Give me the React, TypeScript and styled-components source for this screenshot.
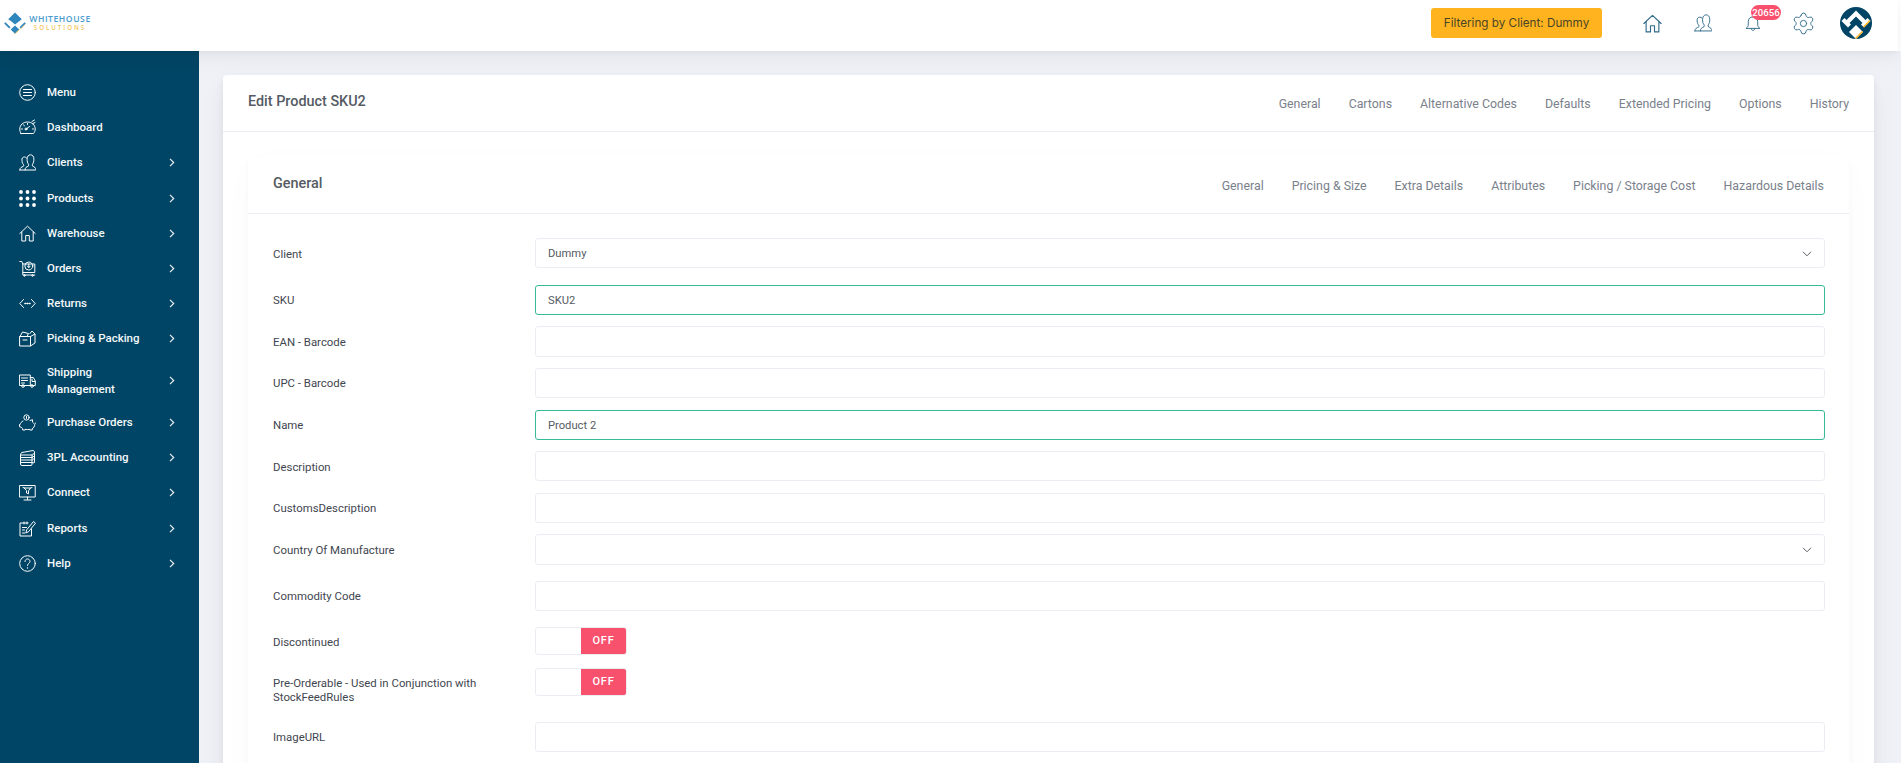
import React from 'react';
import styled, { createGlobalStyle } from 'styled-components';
import { Settings } from 'lucide-react';

const Global = createGlobalStyle`
  html, body { margin: 0; padding: 0; height: 100%; overflow: hidden; background: #f0f1f7; }
  #root { height: 100%; }
  * { box-sizing: border-box; }
`;

const Shell = styled.div`
  display: flex;
  width: 100%;
  height: 763px;
  overflow: hidden;
  font-family: Roboto, 'Liberation Sans', sans-serif;
`;
const Viewport = styled.div`
  flex: 1;
  min-width: 0;
  display: flex;
  flex-direction: column;
`;
const Rail = styled.div`
  width: 3px;
  background: #f0f1f7;
`;
const RailCap = styled.div`
  height: 51px;
  background: #fff;
`;
const TopBar = styled.header`
  height: 51px;
  flex: none;
  background: #fff;
  display: flex;
  align-items: center;
  position: relative;
  z-index: 2;
  box-shadow: 0 7px 16px rgba(4, 9, 20, 0.05), 0 2px 4px rgba(4, 9, 20, 0.03);
`;
const Logo = styled.div`
  display: flex;
  align-items: center;
  margin-left: 4px;
  margin-top: -5px;
  gap: 2px;
`;
const LogoWords = styled.div`
  display: flex;
  flex-direction: column;
  align-items: center;
  width: 64px;
`;
const LogoMain = styled.span`
  font: 600 8.6px/9px 'Open Sans', sans-serif;
  letter-spacing: 0.55px;
  color: #4a9bce;
  white-space: nowrap;
`;
const LogoSub = styled.span`
  font: 600 6.2px/8px 'Open Sans', sans-serif;
  letter-spacing: 1.95px;
  color: #f3c55e;
  white-space: nowrap;
`;
const TopRight = styled.div`
  margin-left: auto;
  padding-bottom: 5px;
  display: flex;
  align-items: center;
`;
const FilterBadge = styled.div`
  width: 171px;
  height: 30px;
  margin-right: 41px;
  background: #ffb41f;
  border-radius: 3px;
  display: flex;
  align-items: center;
  justify-content: center;
  font: 400 11.7px Inter, sans-serif;
  color: #4b4527;
  white-space: nowrap;
`;
const TopIcon = styled.div<{ $w: number; $mr: number }>`
  width: ${(p) => p.$w}px;
  margin-right: ${(p) => p.$mr}px;
  display: flex;
  position: relative;
  color: #2f6a8a;
`;
const GearIcon = styled(Settings)`
  flex: none;
  margin: -3px;
`;
const CountBadge = styled.span`
  position: absolute;
  top: -10px;
  left: 6px;
  width: 30px;
  height: 15px;
  border-radius: 8px;
  background: #f7516e;
  color: #fff;
  font: 500 9.6px/15px Roboto, sans-serif;
  text-align: center;
`;
const Avatar = styled.div`
  width: 32px;
  height: 32px;
  margin-right: 26px;
  display: flex;
`;
const Body = styled.div`
  flex: 1;
  min-height: 0;
  display: flex;
`;
const Sidebar = styled.nav`
  width: 199px;
  flex: none;
  background: #004565;
  padding: 24px 0 0 19px;
  color: #fff;
`;
const NavItem = styled.div<{ $tall?: boolean }>`
  display: flex;
  align-items: center;
  height: ${(p) => (p.$tall ? 48.5 : 35.2)}px;
  padding-right: 23px;
`;
const NavIcon = styled.div`
  width: 17px;
  height: 17px;
  flex: none;
  margin-right: 11px;
  display: flex;
`;
const NavText = styled.span`
  flex: 1;
  font: 500 11.5px/17px Roboto, sans-serif;
  color: #f4f8fa;
`;
const NavChevron = styled.div`
  width: 8px;
  display: flex;
  justify-content: center;
`;
const Main = styled.main`
  flex: 1;
  min-width: 0;
  padding: 24px 24px 0;
  overflow: hidden;
`;
const shadow = `0 7.5px 35px rgba(4,9,20,.03), 0 15px 22px rgba(4,9,20,.03), 0 4px 8.5px rgba(4,9,20,.05), 0 2px 3px rgba(4,9,20,.03)`;
const OuterCard = styled.section`
  background: #fff;
  border-radius: 4px;
  box-shadow: ${shadow};
  min-height: 900px;
`;
const CardHead = styled.div`
  height: 57px;
  border-bottom: 1px solid #ebecf1;
  display: flex;
  align-items: center;
  justify-content: space-between;
  padding: 0 25px;
`;
const Title = styled.h2`
  margin: -3px 0 0;
  font: 500 14.4px/20px Roboto, sans-serif;
  color: #555b63;
`;
const Tabs = styled.div`
  display: flex;
  gap: 28px;
  margin-top: 1px;
`;
const Tab = styled.span`
  font: 400 12.35px/16px Roboto, sans-serif;
  color: #7a818b;
  white-space: nowrap;
`;
const InnerWrap = styled.div`
  padding: 25px 25px 0;
`;
const InnerCard = styled.section`
  background: #fff;
  border-radius: 4px;
  box-shadow: 0 7.5px 35px rgba(4,9,20,.02), 0 4px 8.5px rgba(4,9,20,.02), 0 2px 3px rgba(4,9,20,.015);
  min-height: 800px;
`;
const Form = styled.div`
  padding: 24px 24px 0 25px;
`;
const Row = styled.div<{ $after: number }>`
  display: grid;
  grid-template-columns: 262px 1fr;
  margin-bottom: ${(p) => p.$after}px;
`;
const Label = styled.label`
  font: 400 11.4px/14px Roboto, sans-serif;
  color: #3f4650;
  padding-top: 8.5px;
  width: 212px;
`;
const Field = styled.div<{ $valid?: boolean }>`
  height: 30.4px;
  border: 1px solid ${(p) => (p.$valid ? '#35bb95' : '#ecedf3')};
  border-radius: 3px;
  background: #fff;
  display: flex;
  align-items: center;
  justify-content: space-between;
  padding: 1px 12px 0;
  font: 400 11.2px Roboto, sans-serif;
  color: #555b63;
`;
const Toggle = styled.div`
  width: 92px;
  height: 28px;
  border: 1px solid #ecedf3;
  border-radius: 3px;
  display: flex;
  justify-content: flex-end;
  overflow: hidden;
`;
const ToggleOff = styled.span`
  width: 45px;
  background: #f7516e;
  color: #fff;
  font: 500 11px/25px Roboto, sans-serif;
  letter-spacing: 0.8px;
  text-align: center;
`;

const S = (p: { children: React.ReactNode; size?: number; w?: number }) => (
  <svg width={p.size ?? 17} height={p.size ?? 17} viewBox="0 0 17 17" fill="none" stroke="currentColor" strokeWidth={p.w ?? 1} strokeLinecap="round" strokeLinejoin="round">
    {p.children}
  </svg>
);

const homePath = 'M.8 8.500L8.500 1.200l7.700 7.300M2.800 7v9h3.900v-5.500h3.600V16h3.900V7';
const usersA = 'M.8 16h15.400M.8 16c0-2.500 2-3 3.500-3.600.5-.5.5-1.200.2-1.800-1-1-1.500-2.500-1.500-4C2.500 4.200 3.800 3 5.500 3c.8 0 1.500.3 2 .8';
const usersB = 'M6 16c0-2.500 1.500-3 3.300-3.800.5-.6.5-1.400.2-2-1-1-1.400-3-1.400-5C8.100 2.500 9.500.8 11.500.8s3.400 1.700 3.400 4.400c0 2-.5 4-1.400 5-.3.6-.3 1.400.2 2 1.500.7 3.300 1.300 3.300 3.800';

const icons: Record<string, React.ReactNode> = {
  menu: <S><circle cx="8.500" cy="8.500" r="7.800" /><path d="M4.500 5.500h8M4.500 8.500h8M4.500 11.500h8" /></S>,
  dash: <S><path d="M2 14.500h12.500c1-1.200 1.700-2.800 1.700-4.500 0-4-3.400-7-7.700-7S.8 6 .8 10c0 1.700.4 3.300 1.200 4.500z" /><path d="M6.500 10.500l4-3M2.500 10h1M13.500 10h1M4.500 6l1 .8M8.500 4.500v1" /><circle cx="7" cy="10" r="1" /><path d="M13 2.500l2.500-1.500M14 4.500l2-1" /></S>,
  users: <S><path d={usersA} /><path d={usersB} /></S>,
  dots: <svg width="17" height="17" viewBox="0 0 17 17" fill="currentColor">{[2, 8.5, 15].flatMap((y) => [2, 8.5, 15].map((x) => <circle key={`${x}-${y}`} cx={x} cy={y} r="1.900" />))}</svg>,
  home: <S><path d={homePath} /></S>,
  cart: <S><path d="M.8 1.500h2l1 2.500h12v8.500H3.800V4M3.800 12.500v2.500h12" /><circle cx="9.800" cy="6" r="4" /><path d="M9.800 4v3.500M8.300 6l1.500 1.500L11.300 6" /><circle cx="5.500" cy="15.500" r=".8" /><circle cx="13.500" cy="15.500" r=".8" /></S>,
  swap: <S><path d="M4.500 4.500L.8 8.500l3.700 4M12.500 4.500l3.700 4-3.700 4" /><path d="M6 8.500h.6M8.200 8.500h.6M10.400 8.500h.6" strokeWidth="1.600" /></S>,
  box: <S><path d="M1 6.500h10.500V16H1zM11.500 6.500L16 4v9l-4.500 3M1 6.500L3.500 2l6 1.500L8 6.500M4 10h4M11 3.500L13 1l3 3" /></S>,
  truck: <S><path d="M.8 3h10.500v10.500H.8zM11.300 5.500h3l2 3.500v4.500h-5M13 7v2.500h3M2.500 6h6M2.500 8.500h6M2.500 11h3" /><circle cx="4" cy="14" r="1.300" /><circle cx="13" cy="14" r="1.300" /></S>,
  piggy: <S><circle cx="7.500" cy="3.500" r="2.700" /><path d="M7.500 2.500v2M4 7c-1.500.8-2.500 2-2.800 3.500H.5v2.200l1.500.3c.4.800 1 1.400 1.700 1.800V16h2.500v-.7c1.500.4 3 .4 4.500 0v.7h2.500v-1.300c1.500-.8 2.500-2.500 2.500-4.200 0-1 .5-1.500 1.300-1.500M11 6.500l2.500-.8v2.300c.5.300.8.700 1 1.200" /></S>,
  stack: <S><path d="M1.500 6v9.800l1.500.7h9l1-.7V6M3 3.500L14 1.500l1.500 1v11L14 14M1.500 6h12M1.500 8.500h12M1.500 11h12M1.500 13.500h12M1.500 6c0-1 .5-2 1.500-2.500M15.500 5H14M15.500 7.500H14M15.500 10H14" /></S>,
  monitor: <S><path d="M.8 1.500h15.400v11.500H.8zM8.500 13v2.500M5 16h7" /><path d="M5.500 4h6L9.500 6.800v3L7.500 9V6.800zM4 3.500l1.500.5M13 3.500L11.500 4" /></S>,
  report: <S><path d="M12.500 9v7H1V3h8" /><path d="M5 2v2M8 2v2M3.500 7.500h4M3.500 10h2M3.500 13h2.500" /><path d="M7 12.500l.7-2.700L14.500 1.500l2 1.700-6.800 8.300z" /></S>,
  help: <S><circle cx="8.500" cy="8.500" r="7.800" /><path d="M6 6.500C6 5 7.100 4 8.500 4S11 5 11 6.500 8.500 8.500 8.500 10.500" /><path d="M8.500 12.800v.3" strokeWidth="1.300" /></S>,
};

const nav: { icon: string; label: React.ReactNode; chevron?: boolean; tall?: boolean }[] = [
  { icon: 'menu', label: 'Menu' },
  { icon: 'dash', label: 'Dashboard' },
  { icon: 'users', label: 'Clients', chevron: true },
  { icon: 'dots', label: 'Products', chevron: true },
  { icon: 'home', label: 'Warehouse', chevron: true },
  { icon: 'cart', label: 'Orders', chevron: true },
  { icon: 'swap', label: 'Returns', chevron: true },
  { icon: 'box', label: 'Picking & Packing', chevron: true },
  { icon: 'truck', label: <>Shipping<br />Management</>, chevron: true, tall: true },
  { icon: 'piggy', label: 'Purchase Orders', chevron: true },
  { icon: 'stack', label: '3PL Accounting', chevron: true },
  { icon: 'monitor', label: 'Connect', chevron: true },
  { icon: 'report', label: 'Reports', chevron: true },
  { icon: 'help', label: 'Help', chevron: true },
];

const Chevron = () => (
  <svg width="6" height="9" viewBox="0 0 6 9" fill="none" stroke="#e8eff3" strokeWidth="1.200"><path d="M1 .8l3.700 3.700L1 8.200" /></svg>
);
const DownChevron = () => (
  <svg width="10" height="6" viewBox="0 0 10 6" fill="none" stroke="#5b626a" strokeWidth="1"><path d="M1 .8l4 4 4-4" /></svg>
);

type R = { label: React.ReactNode; value?: string; kind?: 'select' | 'toggle'; valid?: boolean; after: number };
const rows: R[] = [
  { label: 'Client', value: 'Dummy', kind: 'select', after: 16.4 },
  { label: 'SKU', value: 'SKU2', valid: true, after: 11.2 },
  { label: 'EAN - Barcode', after: 11.2 },
  { label: 'UPC - Barcode', after: 11.2 },
  { label: 'Name', value: 'Product 2', valid: true, after: 11.2 },
  { label: 'Description', after: 11.2 },
  { label: 'CustomsDescription', after: 11.2 },
  { label: 'Country Of Manufacture', kind: 'select', after: 16 },
  { label: 'Commodity Code', after: 15.6 },
  { label: 'Discontinued', kind: 'toggle', after: 13 },
  { label: <>Pre-Orderable - Used in Conjunction with StockFeedRules</>, kind: 'toggle', after: 17.5 },
  { label: 'ImageURL', after: 11.2 },
];

export default function App() {
  return (
    <Shell>
      <Global />
      <Viewport>
        <TopBar>
          <Logo>
            <svg width="22" height="22" viewBox="0 0 22 22">
              <path d="M11 .5l6.800 6.800L11 12.500 7.500 9.500 4.200 7.300z" fill="#2f86bd" />
              <path d="M.2 11.500l1.300-1.300 5 5-1.300 1.300z" fill="#2f86bd" />
              <path d="M21.800 11.500l-1.300-1.300-5 5 1.300 1.300z" fill="#2f86bd" />
              <path d="M11 13.500l4.300 4-4.300 4.300-4.300-4.300z" fill="#2f86bd" />
              <path d="M15.300 17.500l-4.300 4.300" stroke="#f3c55e" strokeWidth="1" />
              <path d="M21 12.500l-4.500 4.500" stroke="#f3c55e" strokeWidth=".8" />
            </svg>
            <LogoWords>
              <LogoMain>WHITEHOUSE</LogoMain>
              <LogoSub>SOLUTIONS</LogoSub>
            </LogoWords>
          </Logo>
          <TopRight>
            <FilterBadge>Filtering by Client: Dummy</FilterBadge>
            <TopIcon $w={19} $mr={32}><S size={19}><path d={homePath} /></S></TopIcon>
            <TopIcon $w={18} $mr={33}><S size={18} w={0.9}><path d={usersA} /><path d={usersB} /></S></TopIcon>
            <TopIcon $w={16} $mr={33}>
              <S size={16}><path d="M1.500 14c1.500-1 2-2.500 2-4.500V7c0-3 2-5 5-5s5 2 5 5v2.500c0 2 .5 3.500 2 4.500zM6.500 14.500c.3 1.200 1 1.800 2 1.800s1.700-.6 2-1.800" /></S>
              <CountBadge>20656</CountBadge>
            </TopIcon>
            <TopIcon $w={19} $mr={27}>
              <GearIcon size={25} strokeWidth={0.9} />
            </TopIcon>
            <Avatar>
              <svg width="32" height="32" viewBox="0 0 32 32">
                <clipPath id="avatarClip"><circle cx="16" cy="16" r="16" /></clipPath>
                <g clipPath="url(#avatarClip)">
                  <rect width="32" height="32" fill="#004565" />
                  <path d="M16 3.500L26 13.500l-3 3-7-7-7 7-3-3z" fill="#fff" />
                  <path d="M1.500 14L4.500 11l6.500 6.500-3 3z" fill="#fff" />
                  <path d="M30.500 14L27.500 11 21 17.500l3 3z" fill="#fff" />
                  <path d="M30.500 14L24 20.500l-1-1 6.500-6.500z" fill="#ffb41f" />
                  <path d="M16 18l7 7-7 7-7-7z" fill="#fff" />
                  <path d="M23 25l-7 7-1-1 7-7z" fill="#ffb41f" />
                </g>
              </svg>
            </Avatar>
          </TopRight>
        </TopBar>
        <Body>
          <Sidebar>
            {nav.map((n) => (
              <NavItem key={n.icon} $tall={n.tall}>
                <NavIcon>{icons[n.icon]}</NavIcon>
                <NavText>{n.label}</NavText>
                <NavChevron>{n.chevron && <Chevron />}</NavChevron>
              </NavItem>
            ))}
          </Sidebar>
          <Main>
            <OuterCard>
              <CardHead>
                <Title>Edit Product SKU2</Title>
                <Tabs>
                  {['General', 'Cartons', 'Alternative Codes', 'Defaults', 'Extended Pricing', 'Options', 'History'].map((t) => <Tab key={t}>{t}</Tab>)}
                </Tabs>
              </CardHead>
              <InnerWrap>
                <InnerCard>
                  <CardHead>
                    <Title>General</Title>
                    <Tabs>
                      {['General', 'Pricing & Size', 'Extra Details', 'Attributes', 'Picking / Storage Cost', 'Hazardous Details'].map((t) => <Tab key={t}>{t}</Tab>)}
                    </Tabs>
                  </CardHead>
                  <Form>
                    {rows.map((r, i) => (
                      <Row key={i} $after={r.after}>
                        <Label>{r.label}</Label>
                        {r.kind === 'toggle' ? (
                          <Toggle><ToggleOff>OFF</ToggleOff></Toggle>
                        ) : (
                          <Field $valid={r.valid}>
                            <span>{r.value}</span>
                            {r.kind === 'select' && <DownChevron />}
                          </Field>
                        )}
                      </Row>
                    ))}
                  </Form>
                </InnerCard>
              </InnerWrap>
            </OuterCard>
          </Main>
        </Body>
      </Viewport>
      <Rail><RailCap /></Rail>
    </Shell>
  );
}
